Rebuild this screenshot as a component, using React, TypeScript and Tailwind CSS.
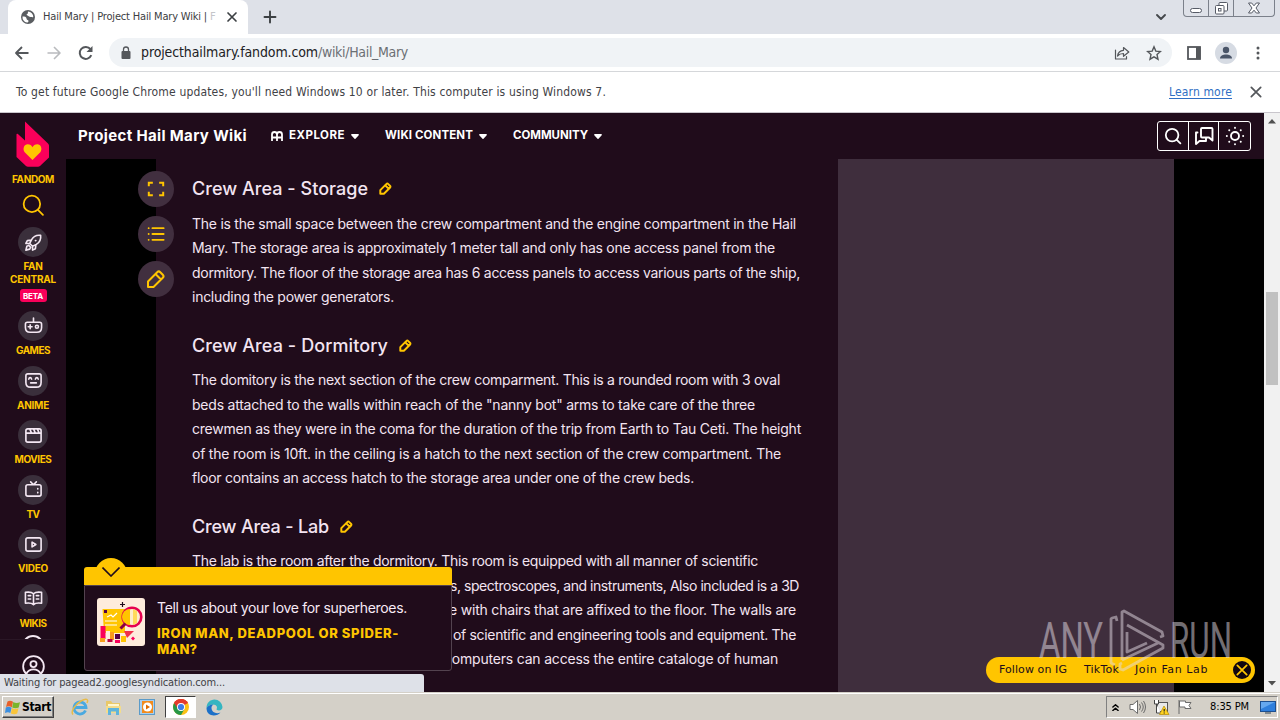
import { useLayoutEffect, useRef, useState } from "react";
import type { ReactNode } from "react";
import clsx from "clsx";

// Spreads the letters so that a run of text fills the given width.
function Fit({
  w,
  className,
  children,
}: {
  w: number;
  className?: string;
  children: string;
}) {
  const ref = useRef<HTMLSpanElement>(null);
  const [spacing, setSpacing] = useState(0);

  useLayoutEffect(() => {
    if (!ref.current) return;
    const natural = ref.current.getBoundingClientRect().width;
    setSpacing((w - natural) / children.length);
  }, [w, children]);

  return (
    <span
      ref={ref}
      className={clsx("inline-block shrink-0 whitespace-pre", className)}
      style={{ letterSpacing: spacing }}
    >
      {children}
    </span>
  );
}

function Icon({
  size,
  children,
  className,
  stroke = 1.5,
  box = 20,
}: {
  size: number;
  children: ReactNode;
  className?: string;
  stroke?: number;
  box?: number;
}) {
  return (
    <svg
      width={size}
      height={size}
      viewBox={`0 0 ${box} ${box}`}
      fill="none"
      stroke="currentColor"
      strokeWidth={stroke}
      strokeLinecap="round"
      strokeLinejoin="round"
      className={clsx("shrink-0", className)}
    >
      {children}
    </svg>
  );
}

const CloseX = ({ size, stroke = 2 }: { size: number; stroke?: number }) => (
  <Icon size={size} stroke={stroke} box={12}>
    <path d="M2 2l8 8M10 2l-8 8" />
  </Icon>
);

const Pencil = ({ size, stroke }: { size: number; stroke: number }) => (
  <Icon size={size} stroke={stroke} className="text-[#ffc500]">
    <path d="M2 18v-5.500L11.200 3.200a2.200 2.200 0 0 1 3.100 0l2.500 2.500a2.200 2.200 0 0 1 0 3.100L7.500 18zM9.500 5l5.500 5.500" />
  </Icon>
);

const TabStrip = () => (
  <div className="flex h-[34px] bg-[#dee1e8]">
    <div className="ml-2 flex w-60 items-center rounded-t-lg bg-white pl-[13px] text-[#3c4043]">
      <svg width="14" height="14" viewBox="0 0 14 14" className="shrink-0">
        <circle cx="7" cy="7" r="7" fill="#5a5d61" />
        <path
          d="M1.500 6.500c2 0 4 .3 4 2s2 1.200 2 2.500-1 1.500-1.500 1.500A5.500 5.500 0 0 1 1.500 6.500zM7 1.500c-.5 1 .5 1.500-.5 2.300S5 5 6.500 5.500s1.500 1.500 3 1.500 2 .5 2.800 0A5.500 5.500 0 0 0 7 1.500z"
          fill="#fff"
        />
      </svg>
      <Fit w={167} className="ml-2 text-[11px]">
        {"Hail Mary | Project Hail Mary Wiki | "}
      </Fit>
      <span className="w-[8px] text-[11px] text-[#c4c6c9]">F</span>
      <span className="ml-2">
        <CloseX size={12} stroke={1.700} />
      </span>
    </div>
    <Icon size={14} box={14} stroke={1.900} className="mt-[10px] ml-[15px] text-[#3c4043]">
      <path d="M7 1.500v11M1.500 7h11" />
    </Icon>
    <div className="grow" />
    <Icon size={12} box={12} stroke={1.900} className="mt-[11px] mr-4 text-[#45484c]">
      <path d="M2 4l4 4 4-4" />
    </Icon>
    <div className="mr-[5px] flex h-[17px] w-[92px] rounded-b-[4px] border border-t-0 border-[#7b808a] text-[#565b66]">
      <div className="flex w-[25px] items-end justify-center border-r border-[#7b808a] pb-[3px]">
        <div className="h-[5px] w-3 rounded-sm border border-[#565b66] bg-white" />
      </div>
      <div className="flex w-[25px] items-center justify-center border-r border-[#7b808a]">
        <svg width="13" height="13" viewBox="0 0 13 13" fill="#fff" stroke="#565b66">
          <rect x="4" y="0.500" width="8.500" height="8.500" rx="1" />
          <rect x="0.500" y="3.500" width="8.500" height="8.500" rx="1" />
          <rect x="3.500" y="6.500" width="2.500" height="2.500" />
        </svg>
      </div>
      <div className="flex grow items-center justify-center">
        <svg width="12" height="12" viewBox="0 0 12 12" fill="#fff" stroke="#565b66">
          <path d="M.5 1h3.200L6 3.800 8.300 1h3.200L8 6l3.500 5H8.300L6 8.200 3.700 11H.5L4 6z" />
        </svg>
      </div>
    </div>
  </div>
);

const Toolbar = () => (
  <div className="flex h-[38px] items-center border-b border-[#d5d7da] bg-white text-[#54575b]">
    <Icon size={16} box={16} stroke={1.800} className="ml-[14px]">
      <path d="M14.500 8H2M8 2L2 8l6 6" strokeLinecap="butt" />
    </Icon>
    <Icon size={16} box={16} stroke={1.600} className="ml-4 text-[#b9bbbe]">
      <path d="M1.500 8H14M8 2l6 6-6 6" strokeLinecap="butt" />
    </Icon>
    <Icon size={16} box={16} stroke={2} className="ml-4">
      <path d="M13.300 10.200A6 6 0 1 1 12.500 4.200" strokeLinecap="butt" />
      <path d="M14.500 1v6h-6z" fill="currentColor" stroke="none" />
    </Icon>
    <div className="ml-[15px] flex h-[29px] w-[1063px] items-center rounded-full bg-[#f0f3f6]">
      <svg width="10" height="14" viewBox="0 0 10 14" className="ml-[12px]">
        <rect x="0.500" y="5" width="9" height="8" rx="1" fill="#54575b" />
        <path d="M2.500 5.500V3.500a2.500 2.500 0 0 1 5 0v2" fill="none" stroke="#54575b" strokeWidth="1.300" />
      </svg>
      <Fit w={177} className="ml-[10px] text-[14px] text-[#202124]">
        projecthailmary.fandom.com
      </Fit>
      <Fit w={90} className="text-[14px] text-[#6b6f74]">
        /wiki/Hail_Mary
      </Fit>
      <div className="grow" />
      <Icon size={16} box={16} stroke={1.200}>
        <path d="M1.500 5v9h11v-2.500M3.500 11C4 7.500 6 5.500 9.500 5.300V2.500L14.800 7 9.500 11.300V8.500C7 8.500 5 9.200 3.500 11z" />
      </Icon>
      <Icon size={16} box={16} stroke={1.400} className="mr-[10px] ml-4">
        <path
          d="M8 1.800l1.800 4.300 4.700.4-3.500 3.100 1 4.600L8 11.800l-4 2.400 1-4.600L1.500 6.500l4.700-.4z"
          strokeLinejoin="miter"
        />
      </Icon>
    </div>
    <svg width="14" height="14" viewBox="0 0 14 14" className="ml-[15px]">
      <rect x="1" y="1" width="12" height="12" fill="none" stroke="#54575b" strokeWidth="1.800" />
      <rect x="9" y="1" width="4.500" height="12" fill="#54575b" />
    </svg>
    <svg width="22" height="22" viewBox="0 0 22 22" className="ml-[14px]">
      <circle cx="11" cy="11" r="11" fill="#d6dbe3" />
      <circle cx="11" cy="8" r="3.200" fill="#4a5568" />
      <path d="M5 16.500c0-2.800 3-4 6-4s6 1.200 6 4z" fill="#4a5568" />
    </svg>
    <svg width="4" height="14" viewBox="0 0 4 14" className="ml-[19px]" fill="#54575b">
      <circle cx="2" cy="2" r="1.500" />
      <circle cx="2" cy="7" r="1.500" />
      <circle cx="2" cy="12" r="1.500" />
    </svg>
  </div>
);

const InfoBar = () => (
  <div className="flex h-[41px] items-center border-b border-[#c9c6cc] bg-white text-[12px] text-[#3f4246]">
    <Fit w={590} className="ml-4">
      To get future Google Chrome updates, you'll need Windows 10 or later. This computer is using Windows 7.
    </Fit>
    <div className="grow" />
    <Fit w={63} className="text-[#2f6fc4] underline underline-offset-2">
      Learn more
    </Fit>
    <span className="mr-[17px] ml-[17px] text-[#54575b]">
      <CloseX size={14} stroke={1.500} />
    </span>
  </div>
);

const sideItems = [
  {
    label: "GAMES",
    w: 34,
    icon: (
      <path d="M10 1v4M3.500 5.500h13a2 2 0 0 1 2 2V11c0 3-2 5-5 5h-7c-3 0-5-2-5-5V7.500a2 2 0 0 1 2-2zM6.500 8.300v4M4.500 10.300h4M12 10.300a1.600 1.600 0 1 0 3.200 0 1.600 1.600 0 1 0-3.200 0" />
    ),
  },
  {
    label: "ANIME",
    w: 32,
    icon: (
      <path d="M4 3h12a2 2 0 0 1 2 2v7c0 3-2 5-5 5H7c-3 0-5-2-5-5V5a2 2 0 0 1 2-2zM5 8.500c.5-2 2.500-2 3 0M12 8.500c.5-2 2.500-2 3 0M7 12.500h6" />
    ),
  },
  {
    label: "MOVIES",
    w: 37,
    icon: (
      <path d="M4 3h12a2 2 0 0 1 2 2v10a2 2 0 0 1-2 2H4a2 2 0 0 1-2-2V5a2 2 0 0 1 2-2zM2 7.500h16M6 3l2 4.500M10 3l2 4.500M14 3l2 4.500" />
    ),
  },
  {
    label: "TV",
    w: 13,
    icon: (
      <path d="M4 5h12a2 2 0 0 1 2 2v8a2 2 0 0 1-2 2H4a2 2 0 0 1-2-2V7a2 2 0 0 1 2-2zM7 2l3 3 3-3M14.500 9v.5M14.500 13v.5" />
    ),
  },
  {
    label: "VIDEO",
    w: 30,
    icon: (
      <path d="M4 3h12a2 2 0 0 1 2 2v10a2 2 0 0 1-2 2H4a2 2 0 0 1-2-2V5a2 2 0 0 1 2-2zM8.500 7.500v5l4-2.500z" />
    ),
  },
  {
    label: "WIKIS",
    w: 27,
    icon: (
      <path d="M10 5C8.500 3.500 5 3 1.500 3.500v11.500c3.500-.5 7 0 8.500 1.500 1.500-1.500 5-2 8.500-1.500V3.500C15 3 11.500 3.500 10 5zM10 5v11M4.500 7h2.500M4.500 10.500h2.500M13 7h2.500M13 10.500h2.500" />
    ),
  },
];

const labelClass = "h-[13px] text-[10px] leading-[13px] font-bold text-[#ffc500]";

const SideCircle = ({ children }: { children: ReactNode }) => (
  <div className="flex size-[30px] shrink-0 items-center justify-center rounded-full bg-[#3a2f3b] text-[#f4e8f3]">
    <Icon size={19} stroke={1.700}>
      {children}
    </Icon>
  </div>
);

const Sidebar = () => (
  <aside className="flex w-[66px] shrink-0 flex-col bg-[#200c1b] font-['Inter',sans-serif]">
    <div className="flex h-[526px] shrink-0 flex-col items-center overflow-hidden pt-2">
      <svg width="33" height="46" viewBox="0 0 33 46" className="mr-px shrink-0">
        <path
          d="M9 0.500L32 22.500a3 3 0 0 1 1 2V36.500L24 45a3 3 0 0 1-2 .8H12a3 3 0 0 1-2-.8L.5 36V13.500a.8.8 0 0 1 1.400-.5L9 19.500z"
          fill="#fa005a"
        />
        <path
          d="M16.500 39L8.700 31.300c-2.500-3.500-.5-8 3-8 2.300 0 3.800 1.200 4.800 2.900 1-1.700 2.500-2.900 4.800-2.900 3.500 0 5.500 4.500 3 8z"
          fill="#ffc500"
        />
      </svg>
      <Fit w={42} className={clsx(labelClass, "mt-1.5")}>
        FANDOM
      </Fit>
      <Icon size={22} stroke={1.600} className="mt-2 text-[#ffc500]">
        <circle cx="9" cy="9" r="7.500" />
        <path d="M14.500 14.500l4.500 4.500" />
      </Icon>
      <div className="mt-[11px]">
        <SideCircle>
          <path d="M17.500 2.500c-4-.5-7.500 1-9.500 4.500L6 11l3 3 4-2c3.500-2 5-5.500 4.500-9.500zM7.500 7.500l-4 .5-1.500 3 4 0M12.500 12.500l-.5 4-3 1.500 0-4M12 8h.5M3 14l-1 4 4-1 1-2-2-2z" />
        </SideCircle>
      </div>
      <Fit w={19} className={clsx(labelClass, "mt-[3px]")}>
        FAN
      </Fit>
      <Fit w={46} className={labelClass}>
        CENTRAL
      </Fit>
      <div className="mt-[3px] flex h-[13px] w-[27px] shrink-0 items-center justify-center rounded-[3px] bg-[#fa005a] text-white">
        <Fit w={20} className="text-[8px] font-bold">
          BETA
        </Fit>
      </div>
      <div className="mt-[9px] flex flex-col items-center gap-[8.5px]">
        {sideItems.map((item) => (
          <div key={item.label} className="flex h-[46px] flex-col items-center gap-[3px]">
            <SideCircle>{item.icon}</SideCircle>
            <Fit w={item.w} className={labelClass}>
              {item.label}
            </Fit>
          </div>
        ))}
      </div>
      <div className="mt-[5.5px] size-[22px] shrink-0 rounded-full border-2 border-[#f4e8f3]" />
    </div>
    <div className="flex grow justify-center border-t border-[#2a1726] pt-[15px] text-[#f4e8f3]">
      <Icon size={23} box={24} stroke={1.900}>
        <circle cx="12" cy="12" r="10.800" />
        <circle cx="12" cy="9.500" r="3.200" />
        <path d="M4.500 19.500c1.500-3 4-4.500 7.500-4.500s6 1.500 7.500 4.500" />
      </Icon>
    </div>
  </aside>
);

const Caret = () => (
  <svg width="8" height="5" viewBox="0 0 8 5" className="ml-1.5" fill="#fff">
    <path d="M.8 0h6.400a.7.7 0 0 1 .5 1.200L4.500 4.700a.7.7 0 0 1-1 0L.3 1.200A.7.7 0 0 1 .8 0z" />
  </svg>
);

const headerButton = "flex w-[31px] items-center justify-center";

const WikiHeader = () => (
  <header className="flex h-[46px] shrink-0 items-center bg-[#200c1b] font-['Inter',sans-serif] text-white">
    <Fit w={169} className="ml-3 text-[15px] font-bold">
      Project Hail Mary Wiki
    </Fit>
    <Icon size={12} box={12} stroke={1.800} className="ml-6">
      <path d="M1 11V4.500a2.500 2.500 0 0 1 5 0V11M6 11V4.500a2.500 2.500 0 0 1 5 0V11M1 7.500h10" strokeLinecap="butt" />
    </Icon>
    <Fit w={56} className="ml-1.5 text-[11.5px] font-bold">
      EXPLORE
    </Fit>
    <Caret />
    <Fit w={88} className="ml-[26px] text-[11.5px] font-bold">
      WIKI CONTENT
    </Fit>
    <Caret />
    <Fit w={75} className="ml-[26px] text-[11.5px] font-bold">
      COMMUNITY
    </Fit>
    <Caret />
    <div className="grow" />
    <div className="mr-[13px] flex h-[30px] w-[94px] divide-x divide-white rounded-[3px] border border-white">
      <div className={headerButton}>
        <Icon size={18} stroke={2}>
          <circle cx="9" cy="9" r="7" />
          <path d="M14.200 14.200l4 4" />
        </Icon>
      </div>
      <div className={headerButton}>
        <Icon size={20} stroke={1.900}>
          <path d="M8 2h9.500a1 1 0 0 1 1 1v11.500L15 11.500H8a1 1 0 0 1-1-1V3a1 1 0 0 1 1-1zM3.500 6.500H2V18l3.500-3H12v-3.500" />
        </Icon>
      </div>
      <div className={headerButton}>
        <Icon size={20} stroke={1.900}>
          <circle cx="10" cy="10" r="4" />
          <path d="M10 1.800v.1M10 18.100v.1M1.800 10h.1M18.100 10h.1M4.200 4.200h.1M15.700 4.200h.1M4.200 15.800h.1M15.700 15.800h.1" />
        </Icon>
      </div>
    </div>
  </header>
);

const SectionHeading = ({ w, children }: { w: number; children: string }) => (
  <h3 className="flex h-[30px] items-center">
    <Fit w={w} className="text-[18px] font-medium">
      {children}
    </Fit>
    <span className="ml-[11px]">
      <Pencil size={13} stroke={3} />
    </span>
  </h3>
);

const Lines = ({ rows }: { rows: [string, number, number?][] }) => (
  <div className="flex flex-col text-[14px]">
    {rows.map(([text, w, indent]) => (
      <div
        key={text}
        className="h-[24.5px] leading-[24.5px]"
        style={indent ? { paddingLeft: indent } : undefined}
      >
        <Fit w={w}>{text}</Fit>
      </div>
    ))}
  </div>
);

const Article = () => (
  <article className="w-[682px] shrink-0 bg-[#200c1b] pt-[14px] pl-9 font-['Inter',sans-serif] text-[#f3e4f1]">
    <SectionHeading w={176}>Crew Area - Storage</SectionHeading>
    <div className="mt-[8.5px] mb-[20.5px]">
      <Lines
        rows={[
          ["The is the small space between the crew compartment and the engine compartment in the Hail", 604],
          ["Mary. The storage area is approximately 1 meter tall and only has one access panel from the", 583],
          ["dormitory. The floor of the storage area has 6 access panels to access various parts of the ship,", 608],
          ["including the power generators.", 202],
        ]}
      />
    </div>
    <SectionHeading w={196}>Crew Area - Dormitory</SectionHeading>
    <div className="mt-[8px] mb-[21px]">
      <Lines
        rows={[
          ["The domitory is the next section of the crew comparment. This is a rounded room with 3 oval", 588],
          ["beds attached to the walls within reach of the \"nanny bot\" arms to take care of the three", 563],
          ["crewmen as they were in the coma for the duration of the trip from Earth to Tau Ceti. The height", 609],
          ["of the room is 10ft. in the ceiling is a hatch to the next section of the crew compartment. The", 589],
          ["floor contains an access hatch to the storage area under one of the crew beds.", 502],
        ]}
      />
    </div>
    <SectionHeading w={137}>Crew Area - Lab</SectionHeading>
    <div className="mt-[7.5px]">
      <Lines
        rows={[
          ["The lab is the room after the dormitory. This room is equipped with all manner of scientific", 566],
          ["s, spectroscopes, and instruments, Also included is a 3D", 349, 258],
          ["e with chairs that are affixed to the floor. The walls are", 347, 257],
          ["of scientific and engineering tools and equipment. The", 343, 261],
          ["computers can access the entire cataloge of human", 334, 252],
        ]}
      />
    </div>
  </article>
);

const toolClass = "flex size-9 items-center justify-center rounded-full bg-[#412f3f] text-[#ffc500]";

const PageTools = () => (
  <div className="absolute top-[58px] left-[138px] flex flex-col gap-[9px]">
    <div className={toolClass}>
      <Icon size={18} stroke={2.200}>
        <path d="M2 7V3h4.500M13.500 3H18v4M18 13v4h-4.500M6.500 17H2v-4" strokeLinecap="butt" strokeLinejoin="miter" />
      </Icon>
    </div>
    <div className={toolClass}>
      <Icon size={18} stroke={2}>
        <path d="M6 3.500h12.500M6 10h12.500M6 16.500h12.500M1.800 3.500h.1M1.800 10h.1M1.800 16.500h.1" />
      </Icon>
    </div>
    <div className={toolClass}>
      <Pencil size={20} stroke={2} />
    </div>
  </div>
);

const Promo = () => (
  <div className="absolute top-[445px] left-[84px] w-[368px] font-['Inter',sans-serif]">
    <div className="ml-[11px] flex h-[9px] w-8 overflow-hidden">
      <div className="size-8 shrink-0 rounded-full bg-[#ffc500]" />
    </div>
    <div className="h-[18px] rounded-t-[3px] bg-[#ffc500] pl-[18px]">
      <svg width="18" height="10" viewBox="0 0 18 10" fill="none" stroke="#200c1b" strokeWidth="1.600">
        <path d="M.5 .5L9 9l8.500-8.500" />
      </svg>
    </div>
    <div className="flex h-[86px] rounded-b-[3px] border border-[#53434f] bg-[#200c1b] pt-3 pl-3">
      <svg width="48" height="48" viewBox="0 0 48 48" className="shrink-0">
        <rect width="48" height="48" rx="3" fill="#feecdc" />
        <path d="M5.500 11H28v24H7z" fill="#ffc500" />
        <rect x="3.500" y="28" width="5" height="13" fill="#fa005a" />
        <rect x="3" y="40" width="5" height="4" fill="#f7a01c" />
        <rect x="9" y="33" width="4" height="7" fill="#feecdc" />
        <rect x="13" y="34" width="4" height="8" fill="#f79a1c" />
        <rect x="18" y="36" width="5" height="5" fill="#520044" />
        <rect x="24" y="38" width="5" height="6" fill="#ffc500" />
        <path d="M27 33h10l-7 7z" fill="#f0304a" />
        <rect x="10.500" y="41" width="5" height="3" fill="#b9003f" />
        <rect x="18" y="42" width="5" height="3" fill="#fa005a" />
        <path d="M36 38.500l2 2-2 2-2-2z" fill="#fa005a" />
        <circle cx="35" cy="19" r="9.300" fill="#fdeccb" stroke="#e60050" strokeWidth="2.600" />
        <path d="M33 11a8 8 0 0 0 0 16z" fill="#ffc500" />
        <path d="M36 11l4 2v12l-4 2z" fill="#ffd95a" />
        <path d="M28.500 25.500l-5 5" stroke="#8a0044" strokeWidth="3" />
        <path d="M10 19l4-2 2 2 4-4M8 23h12M8 27h12" stroke="#fff" strokeWidth="1.200" fill="none" />
        <rect x="7" y="12" width="3" height="3" fill="#520044" />
        <path d="M25.500 4v5M23 6.500h5" stroke="#200c1b" strokeWidth="1.200" />
      </svg>
      <div className="ml-3 flex flex-col items-start">
        <Fit w={250} className="text-[14px] leading-5 text-[#f8eaf6]">
          Tell us about your love for superheroes.
        </Fit>
        <Fit w={242} className="mt-[7px] text-[13px] leading-4 font-extrabold text-[#ffc500]">
          IRON MAN, DEADPOOL OR SPIDER-
        </Fit>
        <Fit w={40} className="text-[13px] leading-4 font-extrabold text-[#ffc500]">
          MAN?
        </Fit>
      </div>
    </div>
  </div>
);

const LinksPill = () => (
  <div className="absolute top-[544px] left-[986px] flex h-[26px] w-[269px] items-center rounded-full bg-[#ffc500] pl-[13px] font-['DejaVu_Sans','Inter',sans-serif] text-[11px] text-[#200c1b]">
    <Fit w={68}>Follow on IG</Fit>
    <Fit w={35} className="ml-[17px]">
      TikTok
    </Fit>
    <Fit w={73} className="ml-[16px]">
      Join Fan Lab
    </Fit>
    <div className="ml-[25px] flex size-[18px] items-center justify-center rounded-full bg-[#120610] text-[#ffc500]">
      <CloseX size={14} stroke={1.500} />
    </div>
  </div>
);

const Watermark = () => (
  <svg
    width="200"
    height="68"
    viewBox="0 0 200 68"
    className="absolute top-[495px] left-[1039px] opacity-50"
    fill="#e4dce4"
  >
    <text x="0" y="50" fontSize="50" fontFamily="Roboto, sans-serif" textLength="64" lengthAdjust="spacingAndGlyphs">
      ANY
    </text>
    <text x="131" y="50" fontSize="50" fontFamily="Roboto, sans-serif" textLength="62" lengthAdjust="spacingAndGlyphs">
      RUN
    </text>
    <path
      d="M78 13L77 9l-4 1-1 1v44l4 2M83 52V4l2-1 38 21 1 4-3 1M83 52l36-17M88 17l36 20v3L84 62l-3-1v-5l2-1M88 24v20l20-9"
      fill="none"
      stroke="#e4dce4"
      strokeWidth="2.800"
      strokeLinejoin="round"
    />
  </svg>
);

const Scrollbar = () => (
  <div className="flex w-4 shrink-0 flex-col items-center bg-[#f1f1f1] py-1.5">
    <svg width="8" height="5" viewBox="0 0 8 5" fill="#505050">
      <path d="M4 0l4 4.500H0z" />
    </svg>
    <div className="mt-[168px] h-[93px] w-3 bg-[#c1c1c1]" />
    <div className="grow" />
    <svg width="8" height="5" viewBox="0 0 8 5" fill="#505050">
      <path d="M4 4.500L0 0h8z" />
    </svg>
  </div>
);

const Taskbar = () => (
  <footer className="flex h-7 items-center border-t border-[#d4d0c8] bg-[#d4d0c8] pt-px font-['DejaVu_Sans_Condensed','DejaVu_Sans',sans-serif] shadow-[inset_0_1px_0_#fff]">
    <div className="ml-0.5 flex h-[22px] w-[52px] items-center border border-t-white border-r-[#404040] border-b-[#404040] border-l-white pl-0.5 text-black shadow-[inset_-1px_-1px_0_#808080]">
      <svg width="15" height="15" viewBox="0 0 15 15" className="shrink-0">
        <path d="M2.500 1.500Q5 0 8 1.700L6.800 7.300Q4 5.500 1 7z" fill="#e8602a" />
        <path d="M8.300 2Q11 3.800 15 2.300L13.700 7.500Q10.500 9 7.200 7.500z" fill="#7ab52c" />
        <path d="M.8 7.500Q3.500 6 6.600 7.700L5.300 13Q3 11.500 0 13z" fill="#3b8fe0" />
        <path d="M7 8Q10 9.800 13.500 8.200L12.200 13.500Q9.500 15 5.800 13.500z" fill="#f9c53b" />
      </svg>
      <Fit w={29} className="ml-[2px] text-[12px] font-bold">
        Start
      </Fit>
    </div>
    <svg width="18" height="18" viewBox="0 0 18 18" fill="none" className="ml-[17px]">
      <path d="M14.500 12.500A6 6 0 1 1 15 9.500H4" stroke="#4aa9e0" strokeWidth="2.800" />
      <path d="M2 16.500C-1 13 5 6 10 3s8-2 6 2" stroke="#e8bb48" strokeWidth="1.500" />
    </svg>
    <svg width="17" height="17" viewBox="0 0 17 17" className="ml-4">
      <path d="M1 2h5l1.500 2H15v10H1z" fill="#e9c869" />
      <path d="M3 5h11v3H3z" fill="#fff6cf" />
      <path d="M1 7h15v7H1z" fill="#f3dc8c" />
      <path d="M3 9h11v7h-3v-3.500H6V16H3z" fill="#5fb4dc" />
    </svg>
    <svg width="17" height="17" viewBox="0 0 17 17" className="ml-[17px]">
      <rect x="0.500" y="0.500" width="15" height="15" fill="#a9cfee" stroke="#5b9bc9" />
      <rect x="3" y="2" width="11" height="12" fill="#f28b1d" />
      <circle cx="8.500" cy="8" r="4.500" fill="#fff" />
      <path d="M7 5.500v5l4-2.500z" fill="#e06c00" />
    </svg>
    <div className="ml-[9px] flex h-[22px] w-[31px] items-center justify-center border border-t-[#404040] border-r-white border-b-white border-l-[#404040] bg-white">
      <svg width="16" height="16" viewBox="0 0 16 16">
        <circle cx="8" cy="8" r="8" fill="#fbc116" />
        <path d="M8 8L1.100 4A8 8 0 0 1 14.900 4z" fill="#e33b2e" />
        <path d="M1.100 4A8 8 0 0 0 8 16l3.500-6L8 8z" fill="#279847" />
        <path d="M1.100 4L5 10l3-6h6.900A8 8 0 0 0 1.100 4z" fill="#e33b2e" />
        <circle cx="8" cy="8" r="4" fill="#fff" />
        <circle cx="8" cy="8" r="3.100" fill="#3d7de8" />
      </svg>
    </div>
    <svg width="17" height="17" viewBox="0 0 17 17" className="ml-[10px]">
      <path d="M8.500.5A8 8 0 0 1 16.500 8c0 3-3 4-5.500 3-1-.5 0-1.500 0-2.500C11 6.500 9 5.500 7 5.500S2 6.500.5 9C.5 4 4 .5 8.500.5z" fill="#35b5c1" />
      <path d="M.5 9C2 6.500 5 5.300 7.500 5.600 5 7 5 10 6.500 12s5 3 8 1.500C11 18 .5 18 .5 9z" fill="#1b70c8" />
    </svg>
    <div className="grow" />
    <div className="mr-0.5 flex h-[22px] w-[172px] items-center border border-t-[#808080] border-r-white border-b-white border-l-[#808080] text-black">
      <Icon size={7} box={8} stroke={1.600} className="ml-[5px]">
        <path d="M1 3.500L4 .8l3 2.700M1 7.500l3-2.700 3 2.700" />
      </Icon>
      <svg width="17" height="16" viewBox="0 0 17 16" fill="#fff" stroke="#6b6b6b" className="ml-[10px]">
        <path d="M1 5.500h3L8.500 1.500v13L4 10.500H1z" />
        <path d="M10.500 5q2 3 0 6M12.500 3.500q3.500 4.500 0 9M14.500 2q4 6 0 12" fill="none" />
      </svg>
      <svg width="17" height="16" viewBox="0 0 17 16" className="ml-[7px]">
        <rect x="4.500" y="3.500" width="10" height="9" fill="#e8e8e8" stroke="#555" />
        <path d="M1.500 1v4h4V1M3.500 5v9h4" fill="#fff" stroke="#444" />
        <path d="M11 7l5 8.500H6.500z" fill="#ffd21e" stroke="#b58b00" strokeWidth="0.700" />
        <path d="M11.200 10v2.500M11.200 13.500v1" stroke="#222" strokeWidth="1.200" />
      </svg>
      <svg width="16" height="16" viewBox="0 0 16 16" fill="#fff" stroke="#6b6b6b" className="ml-[7px]">
        <path d="M2 1v14M2.500 2h6v1.500H14l-2 3 2 3H8V8H2.500z" />
      </svg>
      <Fit w={39} className="ml-[17px] pt-px text-[11px]">
        8:35 PM
      </Fit>
      <svg width="16" height="14" viewBox="0 0 16 14" className="ml-[11px]">
        <rect x="0.500" y="1.500" width="15" height="10" fill="#2f7fdc" stroke="#1d4f8f" />
        <path d="M1 2h14L1 9z" fill="#65a8ef" />
        <path d="M5 13h6" stroke="#345" />
      </svg>
    </div>
  </footer>
);

export default function App() {
  return (
    <div className="flex h-[720px] w-[1280px] flex-col overflow-hidden font-['DejaVu_Sans_Condensed','DejaVu_Sans',sans-serif]">
      <TabStrip />
      <Toolbar />
      <InfoBar />
      <div className="relative flex h-[579px] overflow-hidden">
        <Sidebar />
        <div className="flex grow flex-col">
          <WikiHeader />
          <main className="flex h-[533px] overflow-hidden bg-black pl-[90px]">
            <Article />
            <div className="w-[336px] bg-[#3f2e3d]" />
          </main>
        </div>
        <Scrollbar />
        <PageTools />
        <Promo />
        <LinksPill />
        <Watermark />
        <div className="absolute bottom-0 left-0 flex h-[18px] w-[424px] items-center rounded-tr-[3px] bg-[#dee1e8] pl-1 text-[11px] text-[#3f4246]">
          <Fit w={221}>Waiting for pagead2.googlesyndication.com...</Fit>
        </div>
      </div>
      <Taskbar />
    </div>
  );
}
